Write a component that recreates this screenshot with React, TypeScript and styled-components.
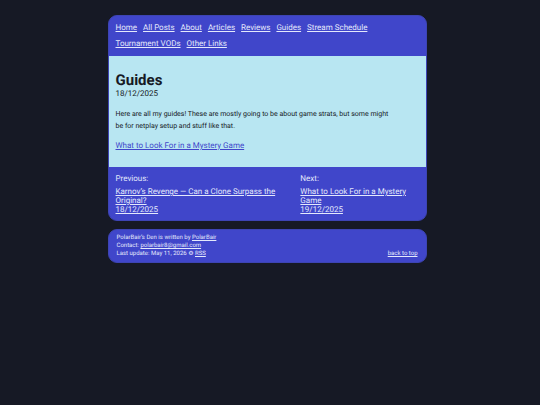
import React from "react";
import styled, { createGlobalStyle } from "styled-components";

const GlobalStyle = createGlobalStyle`
  * { box-sizing: border-box; }
  body {
    margin: 0;
    padding-right: 6px;
    background: #161925;
    color: #161925;
    font-family: Roboto, sans-serif;
    font-size: 8px;
    line-height: 12px;
    text-rendering: geometricPrecision;
  }
`;

const Page = styled.div`
  width: 100%;
  max-width: 335px;
  margin: 0 auto;
  padding: 15px 8px;
  display: flex;
  flex-direction: column;
  gap: 8px;
`;

const Card = styled.div`
  border-radius: 9px;
  overflow: hidden;
  border: 1px solid #3d44b4;
  background: #4046ca;
  color: #e4e9fc;
`;

const Nav = styled.nav`
  display: flex;
  flex-wrap: wrap;
  gap: 0 6px;
  padding: 4px 7px;
  line-height: 16px;
`;

const Link = styled.a<{ $accent?: boolean }>`
  color: ${(p) => (p.$accent ? "#4046ca" : "inherit")};
  text-decoration: underline;
`;

const Article = styled.main`
  background: #b8e6f2;
  color: #161925;
  padding: 16px 7px 15px;
`;

const Title = styled.h1`
  margin: 0;
  font-size: 15px;
  line-height: 16px;
`;

const DateText = styled.time`
  display: block;
`;

const Paragraph = styled.p`
  margin: 8px 0 0;
`;

const Intro = styled(Paragraph)`
  padding-right: 24px;
  font-size: 7px;
`;

const Pager = styled.nav`
  display: flex;
  justify-content: space-between;
  gap: 16px;
  padding: 6px 7px;
`;

const PagerItem = styled.div<{ $width: string }>`
  width: ${(p) => p.$width};
`;

const PagerLink = styled.a`
  display: block;
  margin-top: 2px;
  color: inherit;
  line-height: 9px;
`;

const FooterCard = styled(Card).attrs({ as: "footer" })`
  display: flex;
  justify-content: space-between;
  align-items: flex-end;
  padding: 4px 8px;
  font-size: 6px;
  line-height: 8px;
`;

const navLinks = ["Home", "All Posts", "About", "Articles", "Reviews", "Guides", "Stream Schedule", "Tournament VODs", "Other Links"];

export default function App() {
  return (
    <>
      <GlobalStyle />
      <Page id="top">
        <Card>
          <Nav aria-label="Main">
            {navLinks.map((label) => (
              <Link key={label} href="#">{label}</Link>
            ))}
          </Nav>
          <Article>
            <Title>Guides</Title>
            <DateText dateTime="2025-12-18">18/12/2025</DateText>
            <Intro>
              Here are all my guides! These are mostly going to be about game strats, but some might be for netplay setup and stuff like that.
            </Intro>
            <Paragraph>
              <Link href="#" $accent>What to Look For in a Mystery Game</Link>
            </Paragraph>
          </Article>
          <Pager aria-label="Posts">
            <PagerItem $width="54%">
              Previous:
              <PagerLink href="#">Karnov’s Revenge — Can a Clone Surpass the Original?<br />18/12/2025</PagerLink>
            </PagerItem>
            <PagerItem $width="39%">
              Next:
              <PagerLink href="#">What to Look For in a Mystery Game<br />19/12/2025</PagerLink>
            </PagerItem>
          </Pager>
        </Card>
        <FooterCard>
          <div>
            <div>PolarBair’s Den is written by <Link href="#">PolarBair</Link></div>
            <div>Contact: <Link href="#">polarbair8@gmail.com</Link></div>
            <div>Last update: May 11, 2026 ⚙ <Link href="#">RSS</Link></div>
          </div>
          <Link href="#top">back to top</Link>
        </FooterCard>
      </Page>
    </>
  );
}
